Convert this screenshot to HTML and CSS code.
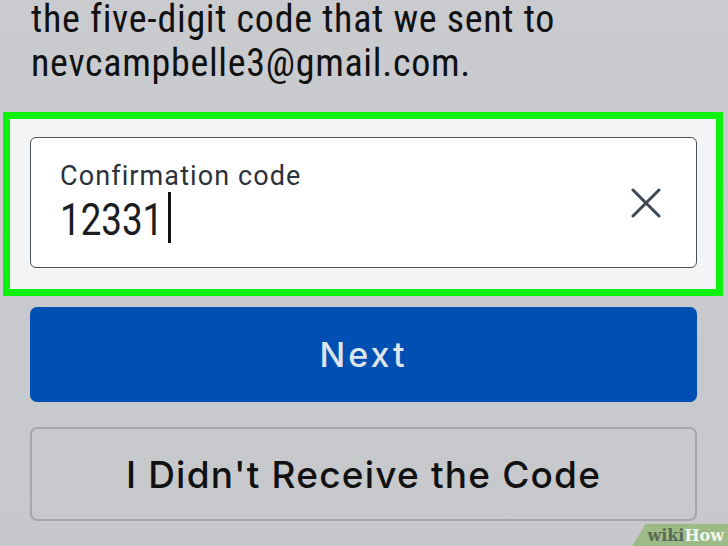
FILE: index.html
```html
<!DOCTYPE html>
<html>
<head>
<meta charset="utf-8">
<link rel="stylesheet" href="styles.css">
</head>
<body>
<div class="page">
  <div class="intro">
    <div class="intro-line first">the five-digit code that we sent to</div>
    <div class="intro-line second">nevcampbelle3@gmail.com.</div>
  </div>
  <div class="highlight">
    <div class="field">
      <div class="field-text">
        <div class="label">Confirmation code</div>
        <div class="value"><span class="digits">12331</span><span class="caret"></span></div>
      </div>
      <svg class="clear" width="30" height="30" viewBox="0 0 30 30">
        <path d="M2 2 L28 28 M28 2 L2 28" stroke="#3f4750" stroke-width="3" stroke-linecap="round" fill="none"/>
      </svg>
    </div>
  </div>
  <div class="btn btn-primary">Next</div>
  <div class="btn btn-secondary">I Didn't Receive the Code</div>
</div>
<div class="wm"><span class="wm-wiki">wiki</span><span class="wm-how">How</span></div>
</body>
</html>
```
FILE: styles.css
```css
html, body {
  margin: 0;
  padding: 0;
}
body {
  width: 728px;
  height: 546px;
  overflow: hidden;
  position: relative;
  background: linear-gradient(180deg, #c9cbce 0%, #c6c8cb 100%);
  font-family: Roboto, "Liberation Sans", sans-serif;
}
.page {
  display: flex;
  flex-direction: column;
}
.intro {
  padding-left: 31px;
  font-size: 38px;
  color: #111;
  letter-spacing: 0.7px;
  font-stretch: condensed;
  white-space: nowrap;
}
.intro-line.first {
  line-height: 38px;
}
.intro-line.second {
  line-height: 50px;
}
.highlight {
  margin: 24px 5px 0 3px;
  border: 7px solid #0cf20c;
  background: #f2f4f6;
  padding: 18px 19px 21px 20px;
}
.field {
  height: 129px;
  border: 1px solid #4b525a;
  border-radius: 6px;
  background: #fff;
  display: flex;
  align-items: center;
  padding: 0 35px 0 29px;
}
.field-text {
  flex: 1;
  align-self: flex-start;
  display: flex;
  flex-direction: column;
  padding-top: 22px;
}
.label {
  font-size: 27px;
  line-height: 32px;
  letter-spacing: 1.1px;
  color: #2b323b;
}
.value {
  margin-top: 4px;
  height: 48px;
  display: flex;
  align-items: flex-start;
}
.digits {
  display: inline-block;
  width: 104px;
  font-size: 44px;
  line-height: 48px;
  color: #1a1d21;
  white-space: nowrap;
  transform: scaleX(0.835);
  transform-origin: left center;
}
.caret {
  width: 3px;
  height: 51px;
  background: #111;
  margin-left: 4px;
  margin-top: -4px;
}
.clear {
  flex: none;
}
.btn {
  margin: 0 31px 0 30px;
  border-radius: 7px;
  display: flex;
  align-items: center;
  justify-content: center;
  font-family: Inter, Roboto, sans-serif;
  font-weight: 500;
  box-sizing: border-box;
}
.btn-primary {
  margin-top: 11px;
  height: 95px;
  background: #0050b4;
  color: #dfe3ea;
  font-size: 34px;
  letter-spacing: 3px;
}
.btn-secondary {
  margin-top: 25px;
  height: 94px;
  border: 2px solid #a4a7aa;
  color: #111;
  font-size: 37px;
  letter-spacing: 1.2px;
}
.wm {
  position: absolute;
  right: 0;
  bottom: 0;
  width: 96px;
  height: 22px;
  background: #9dbb86;
  clip-path: polygon(14% 0, 100% 0, 100% 100%, 0 100%);
  display: flex;
  align-items: center;
  justify-content: flex-end;
  padding-right: 4px;
  box-sizing: border-box;
  font-family: "DejaVu Serif", "Liberation Serif", serif;
  font-weight: bold;
  font-size: 16px;
}
.wm-wiki { color: #5b6a55; }
.wm-how { color: #f3f6f0; }
```
